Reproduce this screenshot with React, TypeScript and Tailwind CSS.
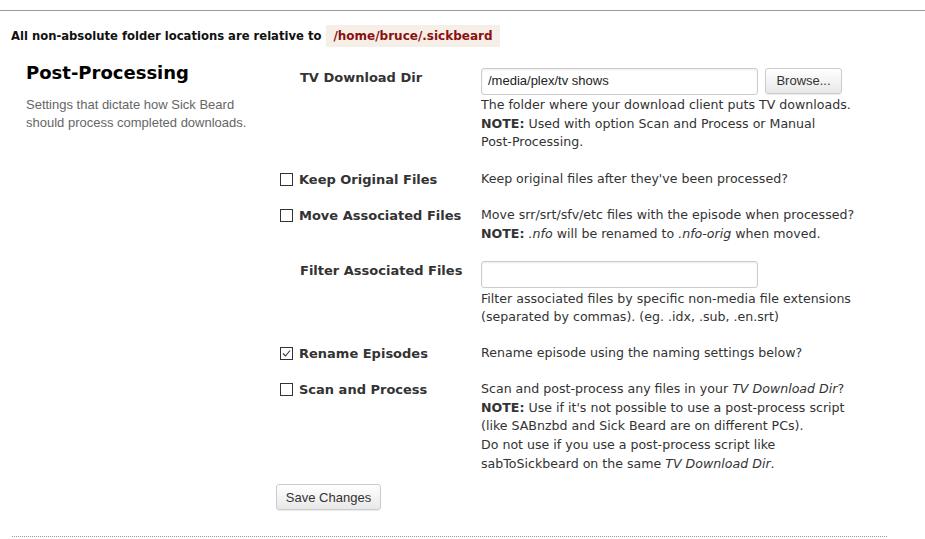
import type { ReactNode } from "react";

const verdana = { fontFamily: '"DejaVu Sans", Verdana, sans-serif' };
const arial = { fontFamily: '"Liberation Sans", Arial, sans-serif' };

function Checkbox({ checked }: { checked?: boolean }) {
  return (
    <span className="w-[13px] h-[13px] border border-[#333] bg-white flex items-center justify-center shrink-0">
      {checked ? (
        <svg width="11" height="11" viewBox="0 0 11 11">
          <path d="M2 5.5 L4.5 8 L9 2.5" fill="none" stroke="#333" strokeWidth="1.1" />
        </svg>
      ) : null}
    </span>
  );
}

function Row({
  label,
  checkbox,
  checked,
  children,
}: {
  label: string;
  checkbox?: boolean;
  checked?: boolean;
  children: ReactNode;
}) {
  return (
    <div className="flex">
      <div className="w-[205px] shrink-0">
        {checkbox ? (
          <div className="flex items-center h-[19px] pl-[4px] gap-[6px]">
            <Checkbox checked={checked} />
            <span className="font-bold text-[13px] text-[#333] leading-[19px]">{label}</span>
          </div>
        ) : (
          <div className="pl-[24px] font-bold text-[13px] text-[#333] leading-[19px]">{label}</div>
        )}
      </div>
      <div className="flex-1 text-[12.6px] leading-[18.7px] text-[#333]">{children}</div>
    </div>
  );
}

function TextInput({ value }: { value?: string }) {
  return (
    <div
      style={arial}
      className="w-[277px] h-[27px] border border-[#ccc] rounded-[3px] bg-white shadow-[inset_0_1px_2px_rgba(0,0,0,0.08)] px-[6px] flex items-center text-[13px] text-[#222]"
    >
      {value}
    </div>
  );
}

function GrayButton({ children, className }: { children: ReactNode; className: string }) {
  return (
    <button
      style={arial}
      className={`block h-[26px] border border-[#ccc] rounded-[3px] bg-gradient-to-b from-white to-[#e8e8e8] shadow-[0_1px_1px_rgba(0,0,0,0.08)] text-[13px] text-[#333] ${className}`}
    >
      {children}
    </button>
  );
}

export default function App() {
  return (
    <div style={verdana} className="w-[925px] h-[539px] bg-white overflow-hidden">
      <div className="mt-[10px] border-t border-[#999]" />

      <div className="flex items-center mt-[14px] pl-[11px]">
        <span className="font-bold text-[11.6px] text-[#111] pt-[2px]">All non-absolute folder locations are relative to</span>
        <span className="ml-[5px] h-[22px] px-[7px] flex items-center bg-[#f5efe8] font-bold text-[12px] text-[#8b1010]">
          /home/bruce/.sickbeard
        </span>
      </div>

      <div className="flex mt-[13px]">
        <div className="w-[276px] shrink-0 pl-[26px]">
          <h3 className="font-bold text-[18px] leading-[26px] text-black">Post-Processing</h3>
          <p style={arial} className="mt-[10px] text-[13px] leading-[18px] text-[#666]">
            Settings that dictate how Sick Beard
            <br />
            should process completed downloads.
          </p>
        </div>

        <div className="flex-1 pt-[8px]">
          <Row label="TV Download Dir">
            <div className="flex gap-[7px]">
              <TextInput value="/media/plex/tv shows" />
              <GrayButton className="w-[77px]">Browse...</GrayButton>
            </div>
            <div className="mt-[1px]">The folder where your download client puts TV downloads.</div>
            <div>
              <b>NOTE:</b> Used with option Scan and Process or Manual
            </div>
            <div>Post-Processing.</div>
          </Row>

          <div className="mt-[18px]">
            <Row label="Keep Original Files" checkbox>
              <div>Keep original files after they've been processed?</div>
            </Row>
          </div>

          <div className="mt-[17px]">
            <Row label="Move Associated Files" checkbox>
              <div>Move srr/srt/sfv/etc files with the episode when processed?</div>
              <div>
                <b>NOTE:</b> <i>.nfo</i> will be renamed to <i>.nfo-orig</i> when moved.
              </div>
            </Row>
          </div>

          <div className="mt-[17px]">
            <Row label="Filter Associated Files">
              <TextInput />
              <div className="mt-[2px]">Filter associated files by specific non-media file extensions</div>
              <div>(separated by commas). (eg. .idx, .sub, .en.srt)</div>
            </Row>
          </div>

          <div className="mt-[17px]">
            <Row label="Rename Episodes" checkbox checked>
              <div>Rename episode using the naming settings below?</div>
            </Row>
          </div>

          <div className="mt-[17px]">
            <Row label="Scan and Process" checkbox>
              <div>
                Scan and post-process any files in your <i>TV Download Dir</i>?
              </div>
              <div>
                <b>NOTE:</b> Use if it's not possible to use a post-process script
              </div>
              <div>(like SABnzbd and Sick Beard are on different PCs).</div>
              <div>Do not use if you use a post-process script like</div>
              <div>
                sabToSickbeard on the same <i>TV Download Dir</i>.
              </div>
            </Row>
          </div>

          <GrayButton className="mt-[11px] w-[105px]">Save Changes</GrayButton>
        </div>
      </div>

      <div className="ml-[12px] w-[875px] mt-[26px] border-b border-dotted border-[#999]" />
    </div>
  );
}
